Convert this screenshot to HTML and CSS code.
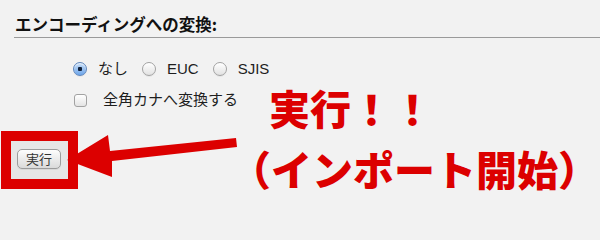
FILE: index.html
```html
<!DOCTYPE html>
<html lang="ja">
<head>
<meta charset="utf-8">
<title>エンコーディングへの変換</title>
<link rel="stylesheet" href="styles.css">
</head>
<body>
<div class="page">
  <section class="panel">
    <h2 class="panel-title">エンコーディングへの変換:</h2>
  </section>
  <div class="options">
    <label class="opt"><input type="radio" name="enc" class="radio" checked><span class="opt-label">なし</span></label>
    <label class="opt"><input type="radio" name="enc" class="radio"><span class="opt-label">EUC</span></label>
    <label class="opt"><input type="radio" name="enc" class="radio"><span class="opt-label">SJIS</span></label>
  </div>
  <div class="options options-check">
    <label class="opt"><input type="checkbox" class="check"><span class="opt-label check-label">全角カナへ変換する</span></label>
  </div>
  <div class="highlight">
    <button class="btn" type="button">実行</button>
  </div>

  <svg class="arrow" width="180" height="60" viewBox="60 125 180 60" aria-hidden="true">
    <polygon points="67,160 108,135 110,151 236,138 237,147 112,161 112,177" fill="#dc0000"/>
  </svg>
  <div class="note">
    <div class="note-line note-line1">実行！！</div>
    <div class="note-line note-line2">（インポート開始）</div>
  </div>
</div>
</body>
</html>
```

FILE: styles.css
```css
html, body {
  margin: 0;
  padding: 0;
}
body {
  background: #f2f2f2;
  font-family: "Liberation Sans", "Noto Sans CJK JP", sans-serif;
  color: #1e1e1e;
  width: 600px;
  height: 201px;
  overflow: hidden;
}
.page {
  position: relative;
  width: 600px;
  height: 201px;
}
.panel {
  margin-left: 14px;
}
.panel-title {
  margin: 0;
  padding: 14px 0 3px 1px;
  font-size: 16.5px;
  line-height: 20px;
  font-weight: 700;
  font-family: "Noto Sans CJK JP", sans-serif;
  color: #111;
  border-bottom: 1px solid #9a9a9a;
}
.options {
  display: flex;
  align-items: center;
  height: 22px;
  margin-top: 20px;
  padding-left: 73px;
}
.options-check {
  margin-top: 9px;
  padding-left: 74px;
}
.opt {
  display: flex;
  align-items: center;
  margin-right: 14px;
}
.opt-label {
  font-size: 15px;
  line-height: 22px;
  color: #1e1e1e;
}
.radio {
  -webkit-appearance: none;
  appearance: none;
  margin: 0 11px 0 0;
  width: 14px;
  height: 14px;
  border-radius: 50%;
  border: 1px solid #a2a2a2;
  background: linear-gradient(#ffffff, #e2e2e2);
  box-shadow: inset 0 1px 1px rgba(255,255,255,0.8), 0 1px 0 rgba(0,0,0,0.05);
  box-sizing: border-box;
}
.radio:checked {
  border-color: #5f86bd;
  background: radial-gradient(circle at 50% 50%, #13223a 0 2px, transparent 2.5px), linear-gradient(#c7def8, #6ea6ea);
}
.check {
  -webkit-appearance: none;
  appearance: none;
  margin: 0 16px 0 0;
  width: 13px;
  height: 13px;
  border-radius: 3px;
  border: 1px solid #a2a2a2;
  background: linear-gradient(#ffffff, #e4e4e4);
  box-sizing: border-box;
}
.highlight {
  display: inline-block;
  margin: 20px 0 0 1px;
  border: 10px solid #dc0000;
  background: #e6e6e6;
  padding: 8px 7px 10px 6px;
  line-height: 0;
}
.btn {
  width: 44px;
  height: 20px;
  margin: 0;
  padding: 0;
  border: 1px solid #9c9c9c;
  border-radius: 5px;
  background: linear-gradient(#fdfdfd, #dadada);
  font-family: "Noto Sans CJK JP", sans-serif;
  font-size: 13px;
  line-height: 18px;
  color: #333;
  box-shadow: 0 1px 0 rgba(0,0,0,0.06);
}
.arrow {
  position: absolute;
  left: 60px;
  top: 125px;
  width: 180px;
  height: 60px;
}
.note {
  position: absolute;
  left: 0;
  top: 0;
  width: 600px;
  height: 201px;
  font-family: "Noto Sans CJK JP", sans-serif;
  font-weight: 900;
  color: #dc0000;
  font-size: 41px;
  line-height: 42px;
  white-space: nowrap;
}
.note-line {
  position: absolute;
}
.note-line1 {
  left: 269px;
  top: 86px;
}
.note-line2 {
  left: 230px;
  top: 147px;
}
```
